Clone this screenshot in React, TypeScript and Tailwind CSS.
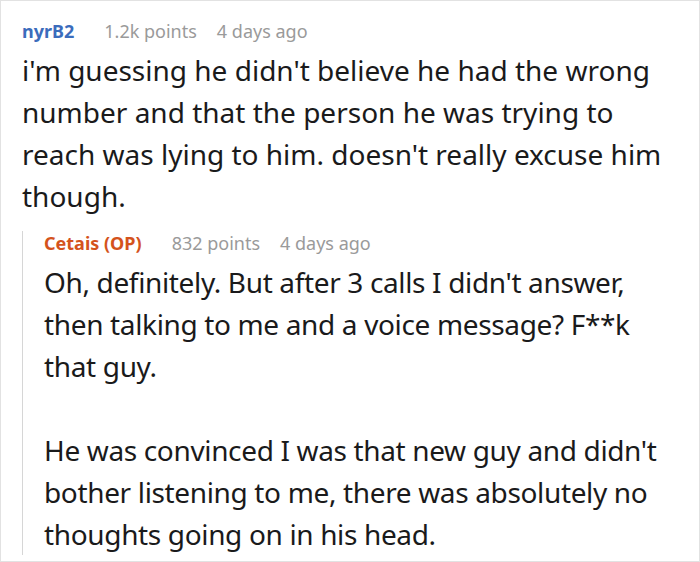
export default function App() {
    return (
        <div
            className="h-[562px] w-[700px] overflow-hidden border border-[#e2e2e2] bg-white text-[#1a1a1b]"
            style={{ fontFamily: '"Noto Sans", "Open Sans", sans-serif' }}
        >
            <div className="pl-[21px] pt-[18px]">
                <div className="flex items-baseline text-[18px] leading-6">
                    <span className="font-bold text-[#3b6cbc]">nyrB2</span>
                    <span className="ml-[30px] text-[#9a9a9a]">1.2k points</span>
                    <span className="ml-5 text-[#9a9a9a]">4 days ago</span>
                </div>
                <p className="mt-[6px] w-[650px] text-[28px] leading-[42px]">
                    i'm guessing he didn't believe he had the wrong number and that the person he was trying to reach was lying to him. doesn't really excuse him though.
                </p>

                <div className="mt-[14px] border-l border-[#d6d6d6] pl-[21px]">
                    <div className="flex items-baseline text-[18px] leading-6">
                        <span className="font-bold text-[#d4531c]">Cetais (OP)</span>
                        <span className="ml-[30px] text-[#9a9a9a]">832 points</span>
                        <span className="ml-5 text-[#9a9a9a]">4 days ago</span>
                    </div>
                    <div className="-mb-[6px] mt-[6px] w-[620px] text-[28px] leading-[42px] tracking-[-0.35px]">
                        <p>Oh, definitely. But after 3 calls I didn't answer, then talking to me and a voice message? F**k that guy.</p>
                        <p className="mt-[42px]">
                            He was convinced I was that new guy and didn't bother listening to me, there was absolutely no thoughts going on in his head.
                        </p>
                    </div>
                </div>
            </div>
        </div>
    );
}
